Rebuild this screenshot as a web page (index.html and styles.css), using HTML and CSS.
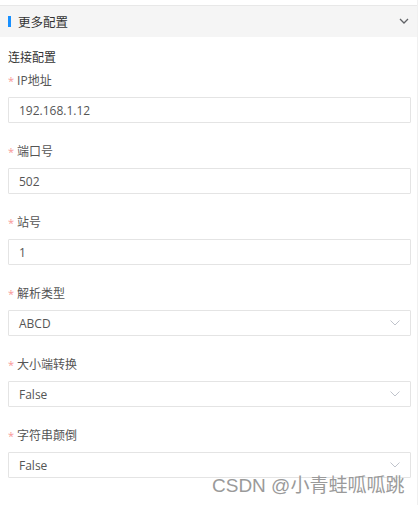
FILE: index.html
```html
<!DOCTYPE html>
<html lang="zh">
<head>
<meta charset="utf-8">
<link rel="stylesheet" href="styles.css">
</head>
<body>
<div class="page">
  <div class="collapse-head">
    <span class="bar"></span>
    <span class="title">更多配置</span>
    <svg class="arrow" width="10" height="6" viewBox="0 0 10 6"><path d="M1 1 L5 5 L9 1" fill="none" stroke="#606266" stroke-width="1.3"/></svg>
  </div>
  <div class="body">
    <div class="section">连接配置</div>
    <div class="item">
      <div class="label"><span class="req">*</span>IP地址</div>
      <div class="input">192.168.1.12</div>
    </div>
    <div class="item">
      <div class="label"><span class="req">*</span>端口号</div>
      <div class="input">502</div>
    </div>
    <div class="item">
      <div class="label"><span class="req">*</span>站号</div>
      <div class="input">1</div>
    </div>
    <div class="item">
      <div class="label"><span class="req">*</span>解析类型</div>
      <div class="input select">ABCD<svg class="sel-arrow" width="10" height="6" viewBox="0 0 10 6"><path d="M0.5 0.5 L5 5 L9.5 0.5" fill="none" stroke="#c0c4cc" stroke-width="1"/></svg></div>
    </div>
    <div class="item">
      <div class="label"><span class="req">*</span>大小端转换</div>
      <div class="input select">False<svg class="sel-arrow" width="10" height="6" viewBox="0 0 10 6"><path d="M0.5 0.5 L5 5 L9.5 0.5" fill="none" stroke="#c0c4cc" stroke-width="1"/></svg></div>
    </div>
    <div class="item">
      <div class="label"><span class="req">*</span>字符串颠倒</div>
      <div class="input select">False<svg class="sel-arrow" width="10" height="6" viewBox="0 0 10 6"><path d="M0.5 0.5 L5 5 L9.5 0.5" fill="none" stroke="#c0c4cc" stroke-width="1"/></svg></div>
    </div>
  </div>
  <div class="watermark">CSDN @小青蛙呱呱跳</div>
</div>
</body>
</html>
```
FILE: styles.css
```css
html, body {
  margin: 0;
  padding: 0;
  background: #fff;
}
body {
  font-family: "Open Sans", "Noto Sans CJK SC", sans-serif;
  font-size: 12px;
  color: #606266;
}
.page {
  position: relative;
  width: 418px;
  height: 505px;
  padding-top: 5px;
  box-sizing: border-box;
  border-right: 1px solid #f0f0f0;
}
.collapse-head {
  display: flex;
  align-items: center;
  height: 31px;
  border-top: 1px solid #e8e8e8;
  background: #f5f5f5;
  padding-left: 8px;
  padding-right: 7px;
}
.bar {
  width: 3px;
  height: 11px;
  background: #1890ff;
  margin-right: 7px;
}
.title {
  flex: 1;
  font-family: "Noto Sans CJK SC", sans-serif;
  font-size: 12.5px;
  color: #333;
}
.arrow {
  margin-right: 1px;
  margin-top: -1px;
}
.body {
  padding: 12px 6px 0 8px;
}
.section {
  font-family: "Noto Sans CJK SC", sans-serif;
  line-height: 16px;
  height: 16px;
  color: #333;
  margin-bottom: 8px;
}
.item {
  margin-bottom: 21px;
}
.label {
  font-family: "Open Sans", "Noto Sans CJK SC", sans-serif;
  line-height: 16px;
  height: 16px;
  margin-bottom: 8px;
  color: #555;
}
.req {
  color: #f89898;
  margin-right: 3px;
  font-size: 11px;
}
.input {
  height: 26px;
  box-sizing: border-box;
  border: 1px solid #e4e4e4;
  border-radius: 1px;
  display: flex;
  align-items: center;
  padding-left: 10px;
  padding-right: 10px;
  color: #555;
  font-size: 12px;
}
.select {
  justify-content: space-between;
}
.watermark {
  position: absolute;
  left: 212px;
  top: 474px;
  font-family: "Liberation Sans", "Noto Sans CJK SC", sans-serif;
  font-size: 19px;
  line-height: 24px;
  color: #9a9a9a;
  text-shadow: 0 0 1px #fff;
  white-space: nowrap;
}
```
